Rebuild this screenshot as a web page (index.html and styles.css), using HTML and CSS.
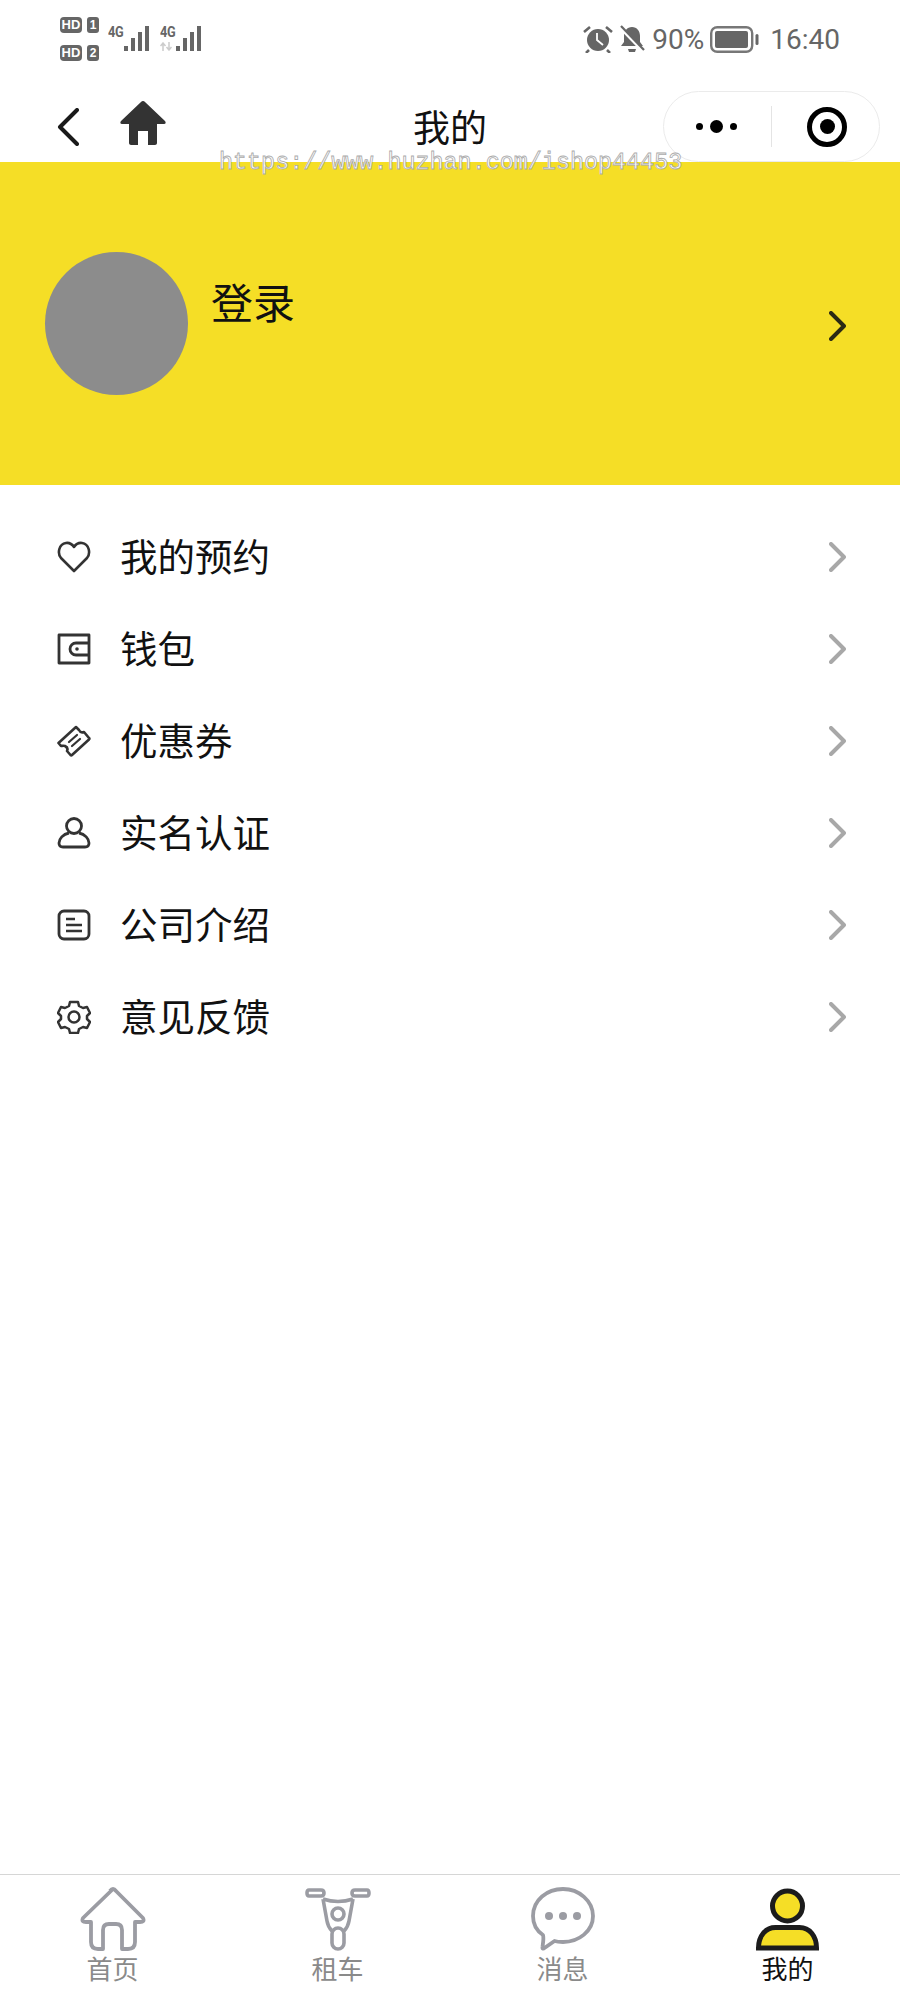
FILE: index.html
```html
<!DOCTYPE html>
<html lang="zh-CN">
<head>
  <meta charset="UTF-8" />
  <title>我的</title>
  <link rel="stylesheet" href="styles.css">
</head>
<body>
  <div class="page">

    <!-- 状态栏 -->
    <div class="status">
      <div class="sims">
        <div class="sim-row"><span class="hd">HD</span><span class="sim-no">1</span></div>
        <div class="sim-row"><span class="hd">HD</span><span class="sim-no">2</span></div>
      </div>
      <div class="signal">
        <span class="net">4G</span>
        <svg class="bars" viewBox="0 0 27 25"><path d="M1 20h4v5H1zM8 12h4v13H8zM15 6h4v19h-4zM22 0h4v25h-4z" fill="#666"/></svg>
      </div>
      <div class="signal second">
        <div class="net-col">
          <span class="net">4G</span>
          <svg class="updown" viewBox="0 0 12 9"><path d="M3 9V2M0.500 4L3 1l2.500 3M9 0v7M6.500 5L9 8l2.500-3" fill="none" stroke="#ccc" stroke-width="1.500"/></svg>
        </div>
        <svg class="bars" viewBox="0 0 27 25"><path d="M1 20h4v5H1zM8 12h4v13H8zM15 6h4v19h-4zM22 0h4v25h-4z" fill="#666"/></svg>
      </div>
      <div class="status-right">
        <svg class="s-icon" viewBox="0 0 30 28">
          <circle cx="15" cy="15" r="11" fill="#666"/>
          <path d="M14 8v7l6 5" fill="none" stroke="#fff" stroke-width="1.800"/>
          <path d="M1 7l6-5M29 7l-6-5M6 25l-3 3M24 25l3 3" stroke="#666" stroke-width="2.600" fill="none"/>
        </svg>
        <svg class="s-icon bell" viewBox="0 0 26 28">
          <path d="M13 2c5 0 8 4 8 9v6l3 4H2l3-4v-6c0-5 3-9 8-9z" fill="#666"/>
          <path d="M9 24h8l-1 3h-6z" fill="#666"/>
          <path d="M2 3l23 24" stroke="#fff" stroke-width="3.500"/>
          <path d="M2 1l23 24" stroke="#666" stroke-width="2.200"/>
        </svg>
        <span class="pct">90%</span>
        <svg class="battery" viewBox="0 0 49 27">
          <rect x="1.200" y="1.200" width="41" height="24.600" rx="6" fill="none" stroke="#777" stroke-width="2.400"/>
          <rect x="5" y="5" width="33" height="17" rx="2" fill="#666"/>
          <rect x="45.500" y="8" width="3" height="11" rx="1.500" fill="#666"/>
        </svg>
        <span class="clock">16:40</span>
      </div>
    </div>

    <!-- 导航栏 -->
    <div class="nav">
      <svg class="back" viewBox="0 0 22 38"><path d="M20 2L3 19l17 17" fill="none" stroke="#1a1a1a" stroke-width="4" stroke-linecap="round" stroke-linejoin="round"/></svg>
      <svg class="home" viewBox="0 0 46 44"><path d="M23 0a3 3 0 0 1 2 1l20 19c1 1 1 3-1 3h-7v19c0 1-1 2-2 2h-7V30H18v14h-7c-1 0-2-1-2-2V23H2c-2 0-2-2-1-3L21 1a3 3 0 0 1 2-1z" fill="#333"/></svg>
      <div class="nav-title">我的</div>
      <div class="capsule">
        <div class="cap-dots"><i class="dot"></i><i class="dot big"></i><i class="dot"></i></div>
        <div class="cap-line"></div>
        <div class="cap-rec"><i class="rec-in"></i></div>
      </div>
    </div>

    <!-- 头部 -->
    <div class="hero">
      <div class="avatar"></div>
      <div class="login">登录</div>
      <svg class="arrow dark" viewBox="0 0 17 30"><path d="M2 2l13 13L2 28" fill="none" stroke="#2b2a14" stroke-width="4" stroke-linecap="round" stroke-linejoin="round"/></svg>
    </div>

    <!-- 菜单 -->
    <div class="menu">
      <div class="item">
        <svg class="m-icon" viewBox="0 0 34 34"><path d="M17 31L4 18C0 13 2 4 9 3c3-.4 6 1 8 4 2-3 5-4.400 8-4 7 1 9 10 5 15z" fill="none" stroke="#333" stroke-width="2.600" stroke-linejoin="round"/></svg>
        <span class="item-text">我的预约</span>
        <svg class="arrow" viewBox="0 0 17 30"><path d="M2 2l13 13L2 28" fill="none" stroke="#a8a8a8" stroke-width="4" stroke-linecap="round" stroke-linejoin="round"/></svg>
      </div>
      <div class="item">
        <svg class="m-icon" viewBox="0 0 34 34"><path d="M2 3h30v28H2zM32 11H19a5.500 5.500 0 0 0 0 12h13" fill="none" stroke="#333" stroke-width="2.800" stroke-linejoin="round"/><circle cx="20" cy="17" r="1.800" fill="#333"/></svg>
        <span class="item-text">钱包</span>
        <svg class="arrow" viewBox="0 0 17 30"><path d="M2 2l13 13L2 28" fill="none" stroke="#a8a8a8" stroke-width="4" stroke-linecap="round" stroke-linejoin="round"/></svg>
      </div>
      <div class="item">
        <svg class="m-icon" viewBox="0 0 34 34"><path d="M1.500 19L19 3l3 3c1 2 3 3 5 2l5 6c.5.500.500 1 0 1.500L15 31c-.5.500-1 .5-1.500 0l-3.500-4c1-2 0-4-2-5-2-.5-3 0-4 0z" fill="none" stroke="#333" stroke-width="2.600" stroke-linejoin="round"/><path d="M12 18l8-7M15 22l8-7" fill="none" stroke="#333" stroke-width="2.200" stroke-linecap="round"/></svg>
        <span class="item-text">优惠券</span>
        <svg class="arrow" viewBox="0 0 17 30"><path d="M2 2l13 13L2 28" fill="none" stroke="#a8a8a8" stroke-width="4" stroke-linecap="round" stroke-linejoin="round"/></svg>
      </div>
      <div class="item">
        <svg class="m-icon" viewBox="0 0 34 34"><circle cx="17" cy="10" r="7.500" fill="none" stroke="#333" stroke-width="2.800"/><path d="M12 17C6 18 2 23 2 27c0 3 2 4 4 4h22c2 0 4-1 4-4 0-4-4-9-10-10" fill="none" stroke="#333" stroke-width="2.800"/></svg>
        <span class="item-text">实名认证</span>
        <svg class="arrow" viewBox="0 0 17 30"><path d="M2 2l13 13L2 28" fill="none" stroke="#a8a8a8" stroke-width="4" stroke-linecap="round" stroke-linejoin="round"/></svg>
      </div>
      <div class="item">
        <svg class="m-icon" viewBox="0 0 34 34"><rect x="2" y="3" width="30" height="28" rx="5" fill="none" stroke="#333" stroke-width="2.800"/><path d="M9 11h9M9 17h16M9 23h16" fill="none" stroke="#333" stroke-width="2.400"/></svg>
        <span class="item-text">公司介绍</span>
        <svg class="arrow" viewBox="0 0 17 30"><path d="M2 2l13 13L2 28" fill="none" stroke="#a8a8a8" stroke-width="4" stroke-linecap="round" stroke-linejoin="round"/></svg>
      </div>
      <div class="item">
        <svg class="m-icon" viewBox="0 0 34 34"><path d="M13 2h8l1 4 4 2 4-1 3 6-3 3v3l3 3-3 6-4-1-4 2-1 4h-8l-1-4-4-2-4 1-3-6 3-3v-3l-3-3 3-6 4 1 4-2z" fill="none" stroke="#333" stroke-width="2.500" stroke-linejoin="round"/><circle cx="17" cy="17" r="5.500" fill="none" stroke="#333" stroke-width="2.500"/></svg>
        <span class="item-text">意见反馈</span>
        <svg class="arrow" viewBox="0 0 17 30"><path d="M2 2l13 13L2 28" fill="none" stroke="#a8a8a8" stroke-width="4" stroke-linecap="round" stroke-linejoin="round"/></svg>
      </div>
    </div>

    <!-- 底部标签 -->
    <div class="tabbar">
      <div class="tab">
        <svg class="tab-icon" viewBox="80 26 66 66"><path d="M113 29L83 58Q81 62 86 62H91V82Q91 89 98 89H103V70Q103 64 109 64H116Q122 64 122 70V89H128Q135 89 135 82V62H140Q145 62 143 58L116 31Q113 27 110 31" fill="none" stroke="#9b9ca3" stroke-width="3.800" stroke-linejoin="round"/></svg>
        <span class="tab-text">首页</span>
      </div>
      <div class="tab">
        <svg class="tab-icon" viewBox="305 26 66 66">
          <g fill="none" stroke="#9b9ca3" stroke-width="3.600" stroke-linejoin="round">
            <path d="M309 30h12q3 0 3 3t-3 3h-12q-2 0-2-3t2-3zM355 30h12q2 0 2 3t-2 3h-12q-3 0-3-3t3-3z"/>
            <path d="M323 39q15 5 30 0M323 39l4 22q1 6 5 10M353 39l-4 22q-1 6-5 10"/>
            <rect x="332" y="68" width="12" height="21" rx="6"/>
            <circle cx="338" cy="54" r="6"/>
          </g>
        </svg>
        <span class="tab-text">租车</span>
      </div>
      <div class="tab">
        <svg class="tab-icon" viewBox="530 26 66 66">
          <path d="M563 29c-16 0-30 11-30 27 0 8 4 15 10 19 1 3 0 8-.5 12-.300 2 1 2 2 1l10-7c3 1 6 1 8.500 1 16 0 30-11 30-26s-14-27-30-27z" fill="none" stroke="#9b9ca3" stroke-width="3.800" stroke-linejoin="round"/>
          <circle cx="549" cy="56" r="4" fill="#9b9ca3"/><circle cx="563" cy="56" r="4" fill="#9b9ca3"/><circle cx="577" cy="56" r="4" fill="#9b9ca3"/>
        </svg>
        <span class="tab-text">消息</span>
      </div>
      <div class="tab on">
        <svg class="tab-icon" viewBox="755 26 66 66">
          <circle cx="787.500" cy="46" r="15" fill="#f5de26" stroke="#1c1c1c" stroke-width="5"/>
          <path d="M758.500 88c0-12 7-20.500 17-20.500h24c10 0 17 8.500 17 20.500z" fill="#f5de26" stroke="#1c1c1c" stroke-width="5" stroke-linejoin="miter"/>
        </svg>
        <span class="tab-text">我的</span>
      </div>
    </div>

    <div class="watermark">https://www.huzhan.com/ishop44453</div>
  </div>
</body>
</html>
```

FILE: styles.css
```css
body {
  margin: 0;
  background: #fff;
  font-family: "Noto Sans CJK SC", "Noto Sans", sans-serif;
  color: #111;
}

.page {
  position: relative;
  width: 900px;
  height: 2000px;
  display: flex;
  flex-direction: column;
  overflow: hidden;
}

/* status bar */
.status {
  height: 78px;
  flex-shrink: 0;
  display: flex;
  align-items: flex-start;
  padding: 0 60px;
  box-sizing: border-box;
}

.sims {
  padding-top: 17px;
  display: flex;
  flex-direction: column;
  gap: 12px;
}

.sim-row {
  display: flex;
  gap: 5px;
}

.hd {
  width: 22px;
  height: 16px;
  background: #666;
  color: #fff;
  border-radius: 4px;
  font: bold 13px/16px "Liberation Sans", sans-serif;
  text-align: center;
}

.sim-no {
  width: 12px;
  height: 16px;
  background: #666;
  color: #fff;
  border-radius: 3px;
  font: bold 12px/16px "Liberation Sans", sans-serif;
  text-align: center;
}

.signal {
  display: flex;
  margin-left: 9px;
  margin-top: 26px;
}

.second {
  margin-left: 10px;
}

.net-col {
  display: flex;
  flex-direction: column;
  gap: 3px;
}

.net {
  width: 15px;
  font: bold 15px/13px "Roboto", sans-serif;
  color: #666;
  letter-spacing: -0.5px;
  transform: scaleX(0.85);
  transform-origin: left;
}

.updown {
  width: 12px;
  height: 9px;
}

.bars {
  width: 27px;
  height: 25px;
}

.status-right {
  margin-left: auto;
  margin-top: 23px;
  display: flex;
  align-items: center;
  height: 32px;
  color: #666;
  font-family: "Roboto", sans-serif;
  font-size: 28px;
}

.s-icon {
  width: 30px;
  height: 28px;
}

.bell {
  width: 26px;
  margin-left: 6px;
  margin-right: 7px;
}

.battery {
  width: 49px;
  height: 27px;
  margin-left: 6px;
  margin-right: 11px;
}

/* nav */
.nav {
  position: relative;
  height: 84px;
  flex-shrink: 0;
  display: flex;
  align-items: center;
  padding-left: 57px;
}

.back {
  width: 22px;
  height: 38px;
  margin-top: 14px;
}

.home {
  width: 46px;
  height: 44px;
  margin-left: 41px;
  margin-top: 6px;
}

.nav-title {
  position: absolute;
  left: 0;
  right: 0;
  top: 26px;
  text-align: center;
  font-size: 37px;
  line-height: 44px;
}

.capsule {
  position: absolute;
  left: 663px;
  top: 13px;
  width: 217px;
  height: 71px;
  box-sizing: border-box;
  border: 1.5px solid #ebebeb;
  border-radius: 36px;
  display: flex;
  align-items: center;
  background: #fff;
}

.cap-dots {
  width: 107px;
  padding-right: 3px;
  box-sizing: border-box;
  display: flex;
  justify-content: center;
  align-items: center;
  gap: 7px;
}

.dot {
  width: 7px;
  height: 7px;
  border-radius: 50%;
  background: #000;
}

.dot.big {
  width: 13px;
  height: 13px;
}

.cap-line {
  width: 1px;
  height: 41px;
  background: #e4e4e4;
}

.cap-rec {
  box-sizing: border-box;
  width: 40px;
  height: 40px;
  margin-left: 35px;
  border: 5px solid #000;
  border-radius: 50%;
  display: flex;
  align-items: center;
  justify-content: center;
}

.rec-in {
  width: 15px;
  height: 15px;
  border-radius: 50%;
  background: #000;
}

/* hero */
.hero {
  height: 323px;
  flex-shrink: 0;
  background: #f5de26;
  display: flex;
  align-items: center;
  padding-left: 45px;
  box-sizing: border-box;
}

.avatar {
  width: 143px;
  height: 143px;
  border-radius: 50%;
  background: #8c8c8c;
}

.login {
  align-self: flex-start;
  margin-top: 109px;
  margin-left: 23px;
  font-size: 42px;
  line-height: 60px;
}

.arrow {
  width: 17px;
  height: 30px;
  margin-left: auto;
  margin-right: 54px;
  flex-shrink: 0;
}

.arrow.dark {
  margin-top: 5px;
}

/* menu */
.menu {
  flex: 1;
  padding-top: 26px;
}

.item {
  height: 92px;
  display: flex;
  align-items: center;
  padding-left: 57px;
}

.m-icon {
  width: 34px;
  height: 34px;
  flex-shrink: 0;
}

.item-text {
  margin-left: 29px;
  margin-bottom: 4px;
  font-size: 37.5px;
  line-height: 50px;
}

/* tabbar */
.tabbar {
  height: 126px;
  flex-shrink: 0;
  box-sizing: border-box;
  border-top: 1px solid #d6d6d6;
  display: grid;
  grid-template-columns: repeat(4, 225px);
  padding-top: 11px;
}

.tab {
  display: flex;
  flex-direction: column;
  align-items: center;
}

.tab-icon {
  width: 66px;
  height: 66px;
}

.tab-text {
  font-size: 26px;
  line-height: 32px;
  color: #8a8a8a;
}

.tab.on .tab-text {
  color: #111;
}

/* watermark */
.watermark {
  position: absolute;
  left: 219px;
  top: 152px;
  font-family: "Liberation Mono", monospace;
  font-size: 23.4px;
  line-height: 22px;
  color: #fff;
  -webkit-text-stroke: 0.8px #aaa;
  white-space: nowrap;
}
```
